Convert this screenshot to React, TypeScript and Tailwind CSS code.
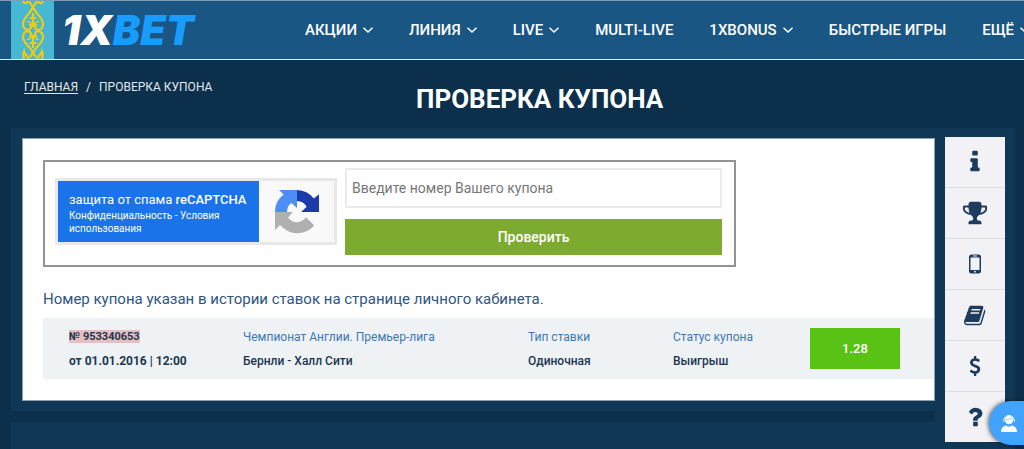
import type { ReactNode } from "react"

const NAV = [
  { label: "АКЦИИ", menu: true },
  { label: "ЛИНИЯ", menu: true },
  { label: "LIVE", menu: true },
  { label: "MULTI-LIVE", menu: false },
  { label: "1XBONUS", menu: true },
  { label: "БЫСТРЫЕ ИГРЫ", menu: false },
  { label: "ЕЩЁ", menu: true },
]

const INFO =
  "M1216 1344v128q0 26-19 45t-45 19h-512q-26 0-45-19t-19-45v-128q0-26 19-45t45-19h64v-384h-64q-26 0-45-19t-19-45v-128q0-26 19-45t45-19h384q26 0 45 19t19 45v576h64q26 0 45 19t19 45zm-128-1152v192q0 26-19 45t-45 19h-256q-26 0-45-19t-19-45v-192q0-26 19-45t45-19h256q26 0 45 19t19 45z"
const TROPHY =
  "M522 883q-74-162-74-371h-256v96q0 78 94.5 162t235.5 113zm1078-275v-96h-256q0 209-74 371 141-29 235.5-113t94.5-162zm128-128v128q0 71-41.5 143t-112 130-173 97.5-215.5 44.5q-42 54-95 95-38 34-52.5 72.5t-14.5 89.5q0 54 30.5 91t97.5 37q75 0 133.5 45.5t58.5 114.5v64q0 14-9 23t-23 9h-832q-14 0-23-9t-9-23v-64q0-69 58.5-114.5t133.5-45.5q67 0 97.5-37t30.5-91q0-51-14.5-89.5t-52.5-72.5q-53-41-95-95-113-5-215.5-44.5t-173-97.5-112-130-41.5-143v-128q0-40 28-68t68-28h288v-96q0-66 47-113t113-47h576q66 0 113 47t47 113v96h288q40 0 68 28t28 68z"
const BOOK =
  "M1639 478q40 57 18 129l-275 906q-19 64-76.5 107.5t-122.5 43.5h-923q-77 0-148.5-53.5t-99.5-131.5q-24-67-2-127 0-4 3-27t4-37q1-8-3-21.5t-3-19.5q2-11 8-21t16.5-23.5 16.5-23.5q23-38 45-91.5t30-91.5q3-10 .5-30t-.5-28q3-11 17-28t17-23q21-36 42-92t25-90q1-9-2.5-32t.5-28q4-13 22-30.5t22-22.5q19-26 42.5-84.5t27.5-96.5q1-8-3-25.5t-2-26.5q2-8 9-18t18-23 17-21q8-12 16.5-30.5t15-35 16-36 19.5-32 26.5-23.5 36-11.5 47.5 5.5l-1 3q38-9 51-9h761q74 0 114 56t18 130l-274 906q-36 119-71.5 153.5t-128.5 34.5h-869q-27 0-38 15-11 16-1 43 24 70 144 70h923q29 0 56-15.5t35-41.5l300-987q7-22 5-57 38 15 59 43zm-1064 2q-4 13 2 22.5t20 9.5h608q13 0 25.5-9.5t16.5-22.5l21-64q4-13-2-22.5t-20-9.5h-608q-13 0-25.5 9.5t-16.5 22.5zm-83 256q-4 13 2 22.5t20 9.5h608q13 0 25.5-9.5t16.5-22.5l21-64q4-13-2-22.5t-20-9.5h-608q-13 0-25.5 9.5t-16.5 22.5z"
const DOLLAR =
  "M1362 1185q0 153-99.5 263.5t-258.5 136.5v175q0 14-9 23t-23 9h-135q-13 0-22.5-9.5t-9.5-22.5v-175q-66-9-127.5-31t-101.5-44.5-74-48-46.5-37.5-17.5-18q-17-21-2-41l103-135q7-10 23-12 15-2 24 9l2 2q113 99 243 125 37 8 74 8 81 0 142.5-43t61.5-122q0-28-15-53t-33.5-42-58.5-37.5-66-32-80-32.5q-39-16-61.5-25t-61.5-26.5-62.5-31-56.5-35.5-53.5-42.5-43.5-49-35.5-58-21-66.5-8.5-78q0-138 98-242t255-134v-180q0-13 9.5-22.5t22.5-9.5h135q14 0 23 9t9 23v176q57 6 110.5 23t87 33.5 63.5 37.5 39 29 15 14q17 18 5 38l-81 146q-8 15-23 16-14 3-27-7-3-3-14.5-12t-39-26.5-58.5-32-74.5-26-85.5-11.5q-95 0-155 43t-60 111q0 26 8.5 48t29.5 41.5 39.5 33 56 31 60.5 27 70 27.5q53 20 81 31.5t76 35 75.5 42.5 62 50 53 63.5 31.5 76.5 13 94z"
const QUESTION =
  "M1088 1256v240q0 16-12 28t-28 12h-240q-16 0-28-12t-12-28v-240q0-16 12-28t28-12h240q16 0 28 12t12 28zm316-600q0 54-15.5 101t-35 76.5-55 59.5-57.5 43.5-61 35.5q-41 23-68.5 65t-27.5 67q0 17-12 32.5t-28 15.5h-240q-15 0-25.5-18.5t-10.5-37.5v-45q0-83 65-156.5t143-108.5q59-27 84-56t25-76q0-42-46.5-74t-107.5-32q-65 0-108 29-35 25-107 115-13 16-31 16-12 0-25-8l-164-125q-13-10-15.5-25t5.5-28q160-266 464-266 80 0 161 31t146 83 106 127.5 41 158.5z"

function Glyph({ d, className = "size-[26px]" }: { d: string; className?: string }) {
  return (
    <svg aria-hidden viewBox="0 0 1792 1792" className={className} fill="currentColor">
      <path d={d} />
    </svg>
  )
}

function Phone() {
  return (
    <svg aria-hidden viewBox="0 0 24 24" className="size-6" fill="currentColor">
      <path
        fillRule="evenodd"
        d="M8.500 2.500h7a2.500 2.500 0 0 1 2.500 2.500v14a2.500 2.500 0 0 1-2.500 2.500h-7A2.500 2.500 0 0 1 6 19V5a2.500 2.500 0 0 1 2.500-2.500zM7.500 5.500v12.500h9V5.500zM10 3.600v.8h4v-.8zM12 18.800a.9.9 0 1 0 0 1.800.9.9 0 0 0 0-1.800z"
      />
    </svg>
  )
}

const TOOLS: { label: string; icon: ReactNode }[] = [
  { label: "Информация", icon: <Glyph d={INFO} /> },
  { label: "Результаты", icon: <Glyph d={TROPHY} /> },
  { label: "Приложения", icon: <Phone /> },
  { label: "Правила", icon: <Glyph d={BOOK} className="size-[23px]" /> },
  { label: "Платежи", icon: <Glyph d={DOLLAR} className="size-5" /> },
  { label: "Помощь", icon: <Glyph d={QUESTION} /> },
]

function Chevron() {
  return (
    <svg aria-hidden viewBox="0 0 10 6" className="h-1.5 w-2.5" fill="none">
      <path d="M.5.7 5 5 9.500.7" stroke="currentColor" strokeWidth="1.5" />
    </svg>
  )
}

// gold ram's-horn ornament that runs down the flag
function Ornament() {
  return (
    <svg aria-hidden viewBox="0 0 24 58" className="h-full w-6" fill="none" stroke="#efcb17" strokeWidth="2.2">
      <path d="M2 0c1 3 4 3 5 0M22 0c-1 3-4 3-5 0M8 0c1 3 3 4 4 6 1-2 3-3 4-6" />
      <path d="M12 5C11 12 2 16 2 23c0 5 4 7 7 5 2-2 1-5-1-4M12 5c1 7 10 11 10 18 0 5-4 7-7 5-2-2-1-5 1-4" />
      <path d="M12 53C11 46 2 43 2 36c0-5 4-7 7-5 2 2 1 5-1 4M12 53c1-7 10-10 10-17 0-5-4-7-7-5-2 2-1 5 1 4" />
      <path d="M12 12v14M8.500 17h7M12 34v13M8.500 42h7" />
      <path d="M6 21c1-1 4 0 6 4 2-4 5-5 6-4M6 38c1 1 4 0 6-4 2 4 5 5 6 4" strokeWidth="1.4" />
      <path d="M3 58c-1-4-1-6 0-8 1 4 4 5 5 8M21 58c1-4 1-6 0-8-1 4-4 5-5 8M12 52l-3 4M12 52l3 4" />
    </svg>
  )
}

function RecaptchaLogo() {
  return (
    <svg aria-hidden viewBox="0 0 64 64" className="size-11">
      <path fill="#1c3aa9" d="M32 0A32 32 0 0 1 56.500 12.500L64 6V32H38l8-7.500A16 16 0 0 0 32 16z" />
      <path fill="#4c8df6" d="M32 0H6l6.500 6.500A32 32 0 0 0 0 32h17.500C17.500 26 20 21 24 19l8 7z" />
      <path fill="#b0b0b0" d="M0 32v26l7.500-7A32 32 0 0 0 57 51.500L45 39.500A15.500 15.500 0 0 1 19 40l7-8z" />
    </svg>
  )
}

export default function App() {
  return (
    <div className="flex min-h-screen flex-col overflow-x-hidden bg-[#0c304b] font-['Roboto',sans-serif]">
      <header className="flex h-15 items-center overflow-hidden border-t border-b border-t-[#7f9fb5] border-b-[#e3ebf0] bg-[#1a5684] pl-[11px] text-white">
        <span className="flex h-full w-[43px] shrink-0 justify-center bg-[#46b8d1]">
          <Ornament />
        </span>
        <a
          href="#"
          className="ml-2 w-[243px] shrink-0 font-['Inter',sans-serif] text-[41px] leading-none font-black italic"
        >
          1X<span className="text-[#189dff]">BET</span>
        </a>
        <nav className="flex shrink-0 gap-9">
          {NAV.map((item) => (
            <a
              key={item.label}
              href="#"
              className="flex items-center gap-1.5 text-[15px] font-medium whitespace-nowrap"
            >
              {item.label}
              {item.menu && <Chevron />}
            </a>
          ))}
        </nav>
      </header>

      <div className="flex h-[68px] items-center pl-6">
        <nav className="flex w-[392px] gap-2 pb-3.5 text-xs text-[#e1e8ed]">
          <a href="#" className="underline underline-offset-2">
            ГЛАВНАЯ
          </a>
          <span>/</span>
          <span>ПРОВЕРКА КУПОНА</span>
        </nav>
        <h1 className="pt-2.5 text-[26px] font-bold text-white">ПРОВЕРКА КУПОНА</h1>
      </div>

      <div className="flex flex-1 pr-[9px] pl-[11px]">
        <div className="flex min-w-0 flex-1 flex-col gap-[11px]">
          <div className="bg-[#103856] py-2.5 pl-[11px]">
            <main className="border border-[#8ba0b0] bg-white pt-[21px] pb-[21px] pl-5">
              <form
                onSubmit={(event) => event.preventDefault()}
                className="flex w-full max-w-[693px] items-start gap-2 border-2 border-[#939393] py-1.5 pr-3 pl-2.5"
              >
                <div className="mt-2.5 flex h-[67px] w-[282px] shrink-0 border-3 border-[#e8e8e8] bg-[#f9f9f9]">
                  <div className="w-[201px] bg-[#1a73e8] pt-2.5 pl-[11px] text-white">
                    <p className="text-[13px] leading-[18px]">
                      защита от спама <span className="font-medium">reCAPTCHA</span>
                    </p>
                    <p className="text-[10px] leading-[13px]">
                      <a href="#">Конфиденциальность</a> - <a href="#">Условия использования</a>
                    </p>
                  </div>
                  <div className="flex flex-1 items-center justify-center">
                    <RecaptchaLogo />
                  </div>
                </div>
                <div className="flex flex-1 flex-col gap-[11px] pb-1">
                  <input
                    type="text"
                    aria-label="Введите номер Вашего купона"
                    placeholder="Введите номер Вашего купона"
                    className="h-10 w-full border-2 border-[#ebebeb] bg-white px-[5px] text-sm text-[#1c3d5c] placeholder:text-[#777]"
                  />
                  <button type="submit" className="h-9 bg-[#7dab2f] text-sm font-medium text-white">
                    Проверить
                  </button>
                </div>
              </form>

              <p className="mt-5 text-[15px] leading-6 text-[#2f5580]">
                Номер купона указан в истории ставок на странице личного кабинета.
              </p>

              <table className="mt-[7px] w-full table-fixed bg-[#eff2f4] text-xs leading-6">
                <tbody>
                  <tr className="h-[61px] text-[#1b3850]">
                    <td className="w-[200px] pl-[26px] font-bold">
                      <span className="bg-[#e5bfc1] text-[11px]">№ 953340653</span>
                      <br />
                      от 01.01.2016 | 12:00
                    </td>
                    <td className="w-[285px]">
                      <a href="#" className="text-[#3b78b5]">
                        Чемпионат Англии. Премьер-лига
                      </a>
                      <br />
                      <b className="font-medium">Бернли - Халл Сити</b>
                    </td>
                    <td className="w-[145px]">
                      <span className="text-[#3b78b5]">Тип ставки</span>
                      <br />
                      <b className="font-medium">Одиночная</b>
                    </td>
                    <td className="w-[137px]">
                      <span className="text-[#3b78b5]">Статус купона</span>
                      <br />
                      <b className="font-medium">Выигрыш</b>
                    </td>
                    <td>
                      <span className="flex h-[41px] w-[90px] items-center justify-center bg-[#58c315] text-[13px] font-medium text-white">
                        1.28
                      </span>
                    </td>
                  </tr>
                </tbody>
              </table>
            </main>
          </div>
          <div className="flex-1 bg-[#103856]" />
        </div>

        <aside className="w-20 shrink-0 bg-[#103856] px-2.5 pt-[9px]">
          <ul className="divide-y divide-[#dcdee4] bg-[#f2f2f6] text-[#1c3b5e]">
            {TOOLS.map((tool) => (
              <li key={tool.label}>
                <button type="button" aria-label={tool.label} className="flex h-[50px] w-full items-center justify-center">
                  {tool.icon}
                </button>
              </li>
            ))}
          </ul>
        </aside>
      </div>

      <button
        type="button"
        aria-label="Чат"
        className="fixed right-0 bottom-1 flex h-11 w-[35px] items-center justify-center rounded-l-full bg-[#41a3fd] pl-1 text-white shadow-[-1px_0_4px_rgba(0,0,0,0.6)]"
      >
        <svg aria-hidden viewBox="0 0 18 18" className="size-[18px]">
          <circle cx="9" cy="6" r="4.2" fill="currentColor" />
          <path d="M3.600 7.500a5.400 6 0 1 1 10.800 0" fill="none" stroke="currentColor" strokeWidth="1" />
          <path
            d="M5.500 5.500C8 6 10 5 10.500 4c.5 1 1.500 1.500 2 1.500"
            fill="none"
            stroke="#41a3fd"
            strokeWidth=".6"
          />
          <path d="M1 18c0-4 2.500-6 5-6.500 1.500 1.500 4.500 1.500 6 0 2.500.5 5 2.500 5 6.500z" fill="currentColor" />
        </svg>
      </button>
    </div>
  )
}
